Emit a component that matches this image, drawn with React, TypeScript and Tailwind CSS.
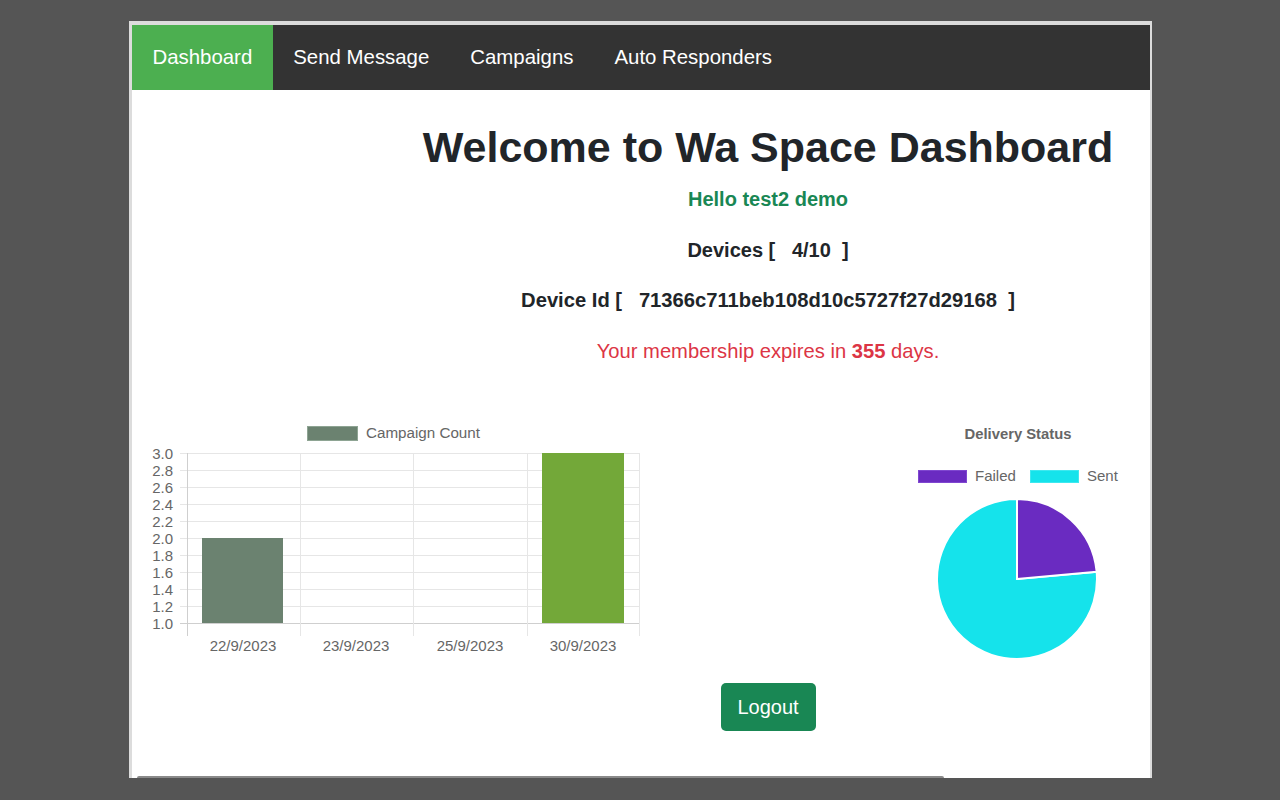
import React from "react";

const font = { fontFamily: '"Liberation Sans", Arial, Helvetica, sans-serif' };

function BarChart() {
  const yTicks = ["3.0", "2.8", "2.6", "2.4", "2.2", "2.0", "1.8", "1.6", "1.4", "1.2", "1.0"];
  const vlines = [47, 160, 273, 387, 499];
  const labels = [
    { x: 103, t: "22/9/2023" },
    { x: 216, t: "23/9/2023" },
    { x: 330, t: "25/9/2023" },
    { x: 443, t: "30/9/2023" },
  ];
  return (
    <svg width="505" height="245" viewBox="0 0 505 245" style={font}>
      <rect x="167.5" y="8.5" width="50" height="14" fill="#6b8270" stroke="#8ea493" strokeWidth="1" />
      <text x="226" y="20" fontSize="15.2" fill="#666">Campaign Count</text>
      {yTicks.map((t, i) => (
        <line key={"h" + i} x1="40" x2="499" y1={35.5 + 17 * i} y2={35.5 + 17 * i} stroke={i === 10 ? "#cfcfcf" : "#e6e6e6"} strokeWidth="1" />
      ))}
      {vlines.map((x, i) => (
        <line key={"v" + i} x1={x + 0.5} x2={x + 0.5} y1="35" y2="218" stroke={i === 0 ? "#cfcfcf" : "#e6e6e6"} strokeWidth="1" />
      ))}
      {yTicks.map((t, i) => (
        <text key={"t" + i} x="33" y={40.5 + 17 * i} fontSize="15" fill="#666" textAnchor="end">{t}</text>
      ))}
      <rect x="62" y="120" width="81" height="85" fill="#6b8270" />
      <rect x="402" y="35" width="82" height="170" fill="#73a839" />
      {labels.map((l) => (
        <text key={l.t} x={l.x} y="233" fontSize="15" fill="#666" textAnchor="middle">{l.t}</text>
      ))}
    </svg>
  );
}

function PieChart() {
  const cx = 117;
  const cy = 161;
  const r = 80;
  const a = (-5.2 * Math.PI) / 180;
  const ex = cx + r * Math.cos(a);
  const ey = cy + r * Math.sin(a);
  return (
    <svg width="240" height="245" viewBox="0 0 240 245" style={font}>
      <text x="118" y="21" fontSize="14.8" fontWeight="bold" fill="#666" textAnchor="middle">Delivery Status</text>
      <rect x="18.5" y="52.5" width="48" height="12" fill="#6a2bc1" stroke="#7f47d0" />
      <text x="75" y="63" fontSize="15" fill="#666">Failed</text>
      <rect x="130.5" y="52.5" width="48" height="12" fill="#15e3eb" stroke="#3ee8ef" />
      <text x="187" y="63" fontSize="15" fill="#666">Sent</text>
      <path
        d={`M${cx},${cy} L${ex},${ey} A${r},${r} 0 1 1 ${cx},${cy - r} Z`}
        fill="#15e3eb"
        stroke="#fff"
        strokeWidth="2"
      />
      <path
        d={`M${cx},${cy} L${cx},${cy - r} A${r},${r} 0 0 1 ${ex},${ey} Z`}
        fill="#6a2bc1"
        stroke="#fff"
        strokeWidth="2"
      />
    </svg>
  );
}

export default function App() {
  const navItems = ["Dashboard", "Send Message", "Campaigns", "Auto Responders"];
  return (
    <div className="w-[1280px] h-[800px] bg-[#555555] overflow-hidden pt-[21px] pl-[129px]" style={font}>
      <div className="relative w-[1023px] h-[757px] bg-white border-[#dcdcdc] border-t-4 border-l-[3px] border-r-2 border-b-0 flex flex-col">
        <nav className="h-[65px] bg-[#333333] flex items-stretch">
          {navItems.map((n, i) => (
            <a
              key={n}
              className={
                "flex items-center px-[20.5px] text-[20.4px] text-white " +
                (i === 0 ? "bg-[#4caf50]" : "")
              }
            >
              {n}
            </a>
          ))}
        </nav>

        <div className="ml-[254px] flex flex-col items-center text-[#212529]">
          <h1 className="mt-[31px] h-[52px] leading-[52px] text-[43px] font-bold whitespace-nowrap">
            Welcome to Wa Space Dashboard
          </h1>
          <div className="mt-[14px] h-[24px] leading-[24px] text-[20px] font-bold text-[#198754]">Hello test2 demo</div>
          <div className="mt-[27px] h-[24px] leading-[24px] text-[20px] font-bold whitespace-pre">{"Devices [   4/10  ]"}</div>
          <div className="mt-[26px] h-[24px] leading-[24px] text-[20.2px] font-bold whitespace-pre">
            {"Device Id [   71366c711beb108d10c5727f27d29168  ]"}
          </div>
          <div className="mt-[27px] h-[24px] leading-[24px] text-[20.2px] text-[#dc3545]">
            Your membership expires in <b>355</b> days.
          </div>
        </div>

        <div className="mt-[55px] flex justify-between pl-[8px] pr-[10px]">
          <BarChart />
          <PieChart />
        </div>

        <div className="ml-[254px] mt-[20px] flex justify-center">
          <button className="w-[95px] h-[48px] rounded-[5px] bg-[#198754] text-white text-[20px]">Logout</button>
        </div>

        <div className="absolute left-[5px] bottom-0 w-[807px] h-[2px] bg-[#8a8a8a] rounded-t-sm" />
      </div>
    </div>
  );
}
